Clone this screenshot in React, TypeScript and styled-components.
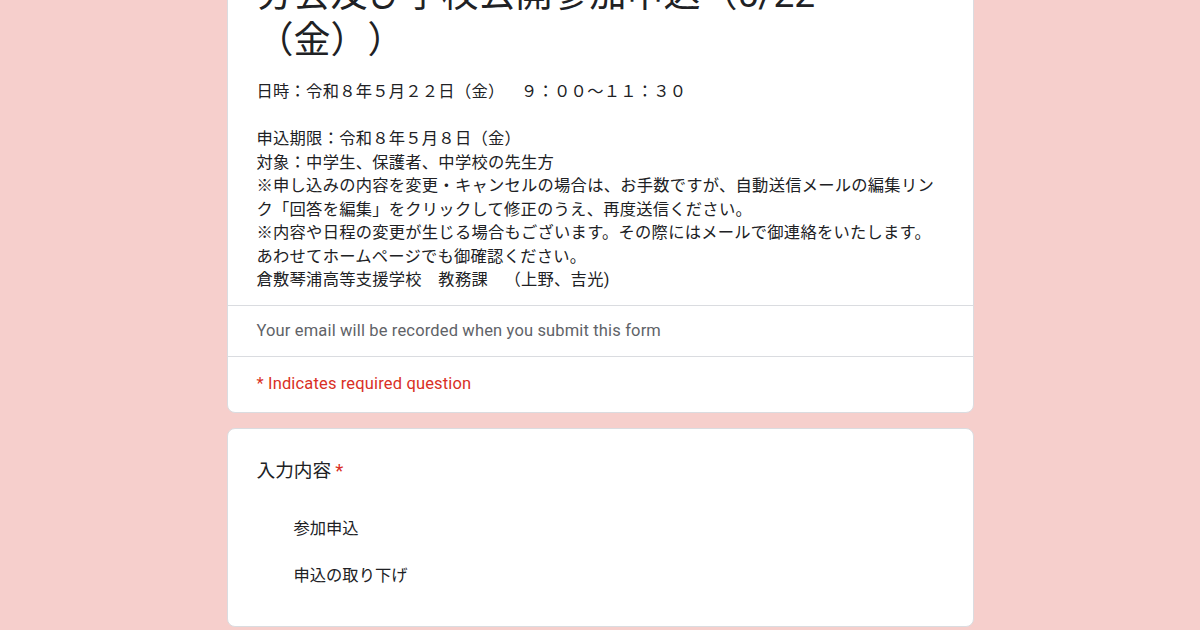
import React from "react";
import styled, { createGlobalStyle } from "styled-components";

const GlobalStyle = createGlobalStyle`
  html, body {
    margin: 0;
    padding: 0;
    background: #f6cfcc;
    overflow: hidden;
  }
  body {
    font-family: Roboto, "Noto Sans CJK JP", sans-serif;
    color: #202124;
    text-spacing-trim: space-all;
  }
`;

const Page = styled.div`
  display: flex;
  flex-direction: column;
  align-items: center;
  gap: 15px;
  margin-top: -53px;
`;

const Card = styled.div`
  width: 747px;
  box-sizing: border-box;
  background: #ffffff;
  border: 1px solid #dadce0;
  border-radius: 8px;
  overflow: hidden;
`;

const Header = styled.div`
  padding: 24px 29px 13px;
`;

const Title = styled.div`
  font-size: 37px;
  line-height: 46px;
  color: #202124;
  text-spacing-trim: space-all;
`;

const Description = styled.div`
  margin-top: 16px;
  font-size: 16.3px;
  line-height: 23.5px;
  letter-spacing: 0.25px;
  color: #202124;
`;

const Line = styled.div`
  min-height: 23.5px;
  white-space: pre-wrap;
`;

const Note = styled.div<{ $tone: "grey" | "red"; $top: number; $bottom: number }>`
  border-top: 1px solid #dadce0;
  padding: ${(p) => p.$top}px 29px ${(p) => p.$bottom}px;
  font-size: 16.5px;
  line-height: 20px;
  letter-spacing: 0.15px;
  color: ${(p) => (p.$tone === "red" ? "#d93025" : "#5f6368")};
`;

const Question = styled.div`
  padding: 30px 29px 28px;
`;

const QuestionTitle = styled.div`
  font-size: 18.7px;
  line-height: 24px;
  color: #202124;
`;

const Required = styled.span`
  color: #d93025;
  margin-left: 4px;
`;

const Options = styled.div`
  margin-top: 21px;
  display: flex;
  flex-direction: column;
`;

const Option = styled.div`
  height: 47px;
  display: flex;
  align-items: center;
  padding-left: 37px;
  font-size: 16.3px;
  color: #202124;
`;

const descriptionLines = [
  "日時：令和８年５月２２日（金）　９：００～１１：３０",
  "",
  "申込期限：令和８年５月８日（金）",
  "対象：中学生、保護者、中学校の先生方",
  "※申し込みの内容を変更・キャンセルの場合は、お手数ですが、自動送信メールの編集リンク「回答を編集」をクリックして修正のうえ、再度送信ください。",
  "※内容や日程の変更が生じる場合もございます。その際にはメールで御連絡をいたします。",
  "あわせてホームページでも御確認ください。",
  "倉敷琴浦高等支援学校　教務課　（上野、吉光)",
];

const options = ["参加申込", "申込の取り下げ"];

export default function App() {
  return (
    <>
      <GlobalStyle />
      <Page>
        <Card>
          <Header>
            <Title>
              分会及び学校公開参加申込（5/22
              <br />
              （金））
            </Title>
            <Description>
              {descriptionLines.map((line, i) => (
                <Line key={i}>{line}</Line>
              ))}
            </Description>
          </Header>
          <Note $tone="grey" $top={15} $bottom={15}>
            Your email will be recorded when you submit this form
          </Note>
          <Note $tone="red" $top={17} $bottom={18}>
            * Indicates required question
          </Note>
        </Card>
        <Card>
          <Question>
            <QuestionTitle>
              入力内容<Required>*</Required>
            </QuestionTitle>
            <Options>
              {options.map((o) => (
                <Option key={o}>{o}</Option>
              ))}
            </Options>
          </Question>
        </Card>
      </Page>
    </>
  );
}
